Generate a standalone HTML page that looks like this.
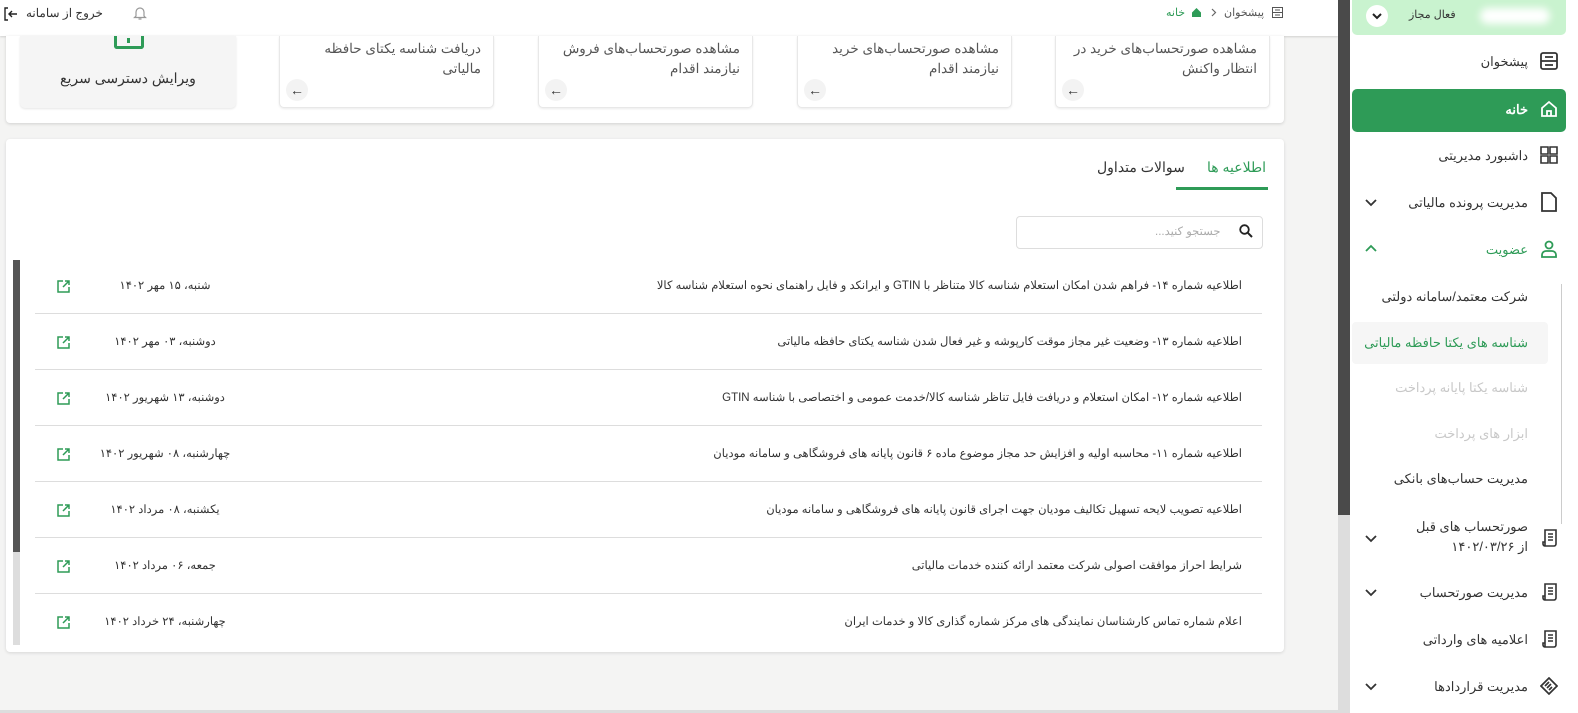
<!DOCTYPE html>
<html><head><meta charset="utf-8"><style>
*{box-sizing:border-box;margin:0;padding:0}
body{width:1578px;height:713px;overflow:hidden;background:#f4f4f3;font-family:"Liberation Sans","Noto Sans CJK SC",sans-serif;color:#333;position:relative}
.a{position:absolute}
.hdr{left:0;top:0;width:1338px;height:36px;background:#fff;box-shadow:0 1px 2px rgba(0,0,0,.15)}
.cards{left:6px;top:36px;width:1278px;height:87px;background:#fff;box-shadow:0 1px 3px rgba(0,0,0,.15);border-radius:0 0 4px 4px}
.card{top:36px;width:215px;height:72px;background:#fff;border:1px solid #e8e8e8;border-top:none;border-radius:0 0 5px 5px;box-shadow:0 1px 2px rgba(0,0,0,.08);direction:rtl;font-size:13.5px;color:#555;padding:3px 12px 0 12px;line-height:20px}
.arr{position:absolute;left:6px;bottom:6px;width:22px;height:22px;border-radius:50%;background:#f3f3f3;font-size:14px;text-align:center;line-height:22px;color:#333}
.main{left:6px;top:139px;width:1278px;height:513px;background:#fff;border-radius:4px;box-shadow:0 1px 3px rgba(0,0,0,.12)}
.row{left:35px;width:1227px;height:56px;border-bottom:1.5px solid #ddd;direction:rtl;font-size:11.5px;color:#333}
.row .t{position:absolute;right:20px;top:0;line-height:56px;white-space:nowrap}
.row .d{position:absolute;left:62px;width:136px;text-align:center;top:0;line-height:56px;direction:rtl;font-size:11.5px}
.row .ic{position:absolute;left:22px;top:22px;width:13px;height:13px}
.mi{position:absolute;left:1351px;width:215px;height:44px;direction:rtl;font-size:13px;color:#333}
.mi .l{position:absolute;right:38px;top:0;line-height:44px;white-space:nowrap}
.mi svg.i{position:absolute;right:8px;top:12px}
.mi .ch{position:absolute;left:14px;top:16px}
.sub{position:absolute;left:1351px;width:187px;height:44px;direction:rtl;font-size:13px;line-height:44px;padding-right:10px;color:#333;white-space:nowrap}
</style></head><body>
<div class="a hdr"></div>
<div class="a" style="top:6px;font-size:12px;direction:rtl;white-space:nowrap;left:26px">خروج از سامانه</div>
<svg class="a" style="left:4px;top:7px" width="14" height="14" viewBox="0 0 14 14"><path d="M4 1H1v12h3M13 7H5M8 4L5 7l3 3" fill="none" stroke="#222" stroke-width="1.4"/></svg>
<svg class="a" style="left:133px;top:5px" width="14" height="16" viewBox="0 0 14 16"><path d="M3 11V7a4 4 0 0 1 8 0v4l1.5 1.5h-11zM5.5 14h3" fill="none" stroke="#999" stroke-width="1.2"/></svg>
<div class="a" style="left:1166px;top:6px;font-size:11px;direction:rtl;white-space:nowrap;color:#2e9b57">خانه</div>
<svg class="a" style="left:1191px;top:7px" width="11" height="11" viewBox="0 0 11 11"><path d="M1 5.5L5.5 1 10 5.5V10H1z" fill="#2e9b57"/></svg>
<svg class="a" style="left:1211px;top:8px" width="6" height="9" viewBox="0 0 6 9"><path d="M1 1l3.5 3.5L1 8" fill="none" stroke="#666" stroke-width="1.2"/></svg>
<div class="a" style="left:1224px;top:6px;font-size:11px;white-space:nowrap;color:#555;direction:rtl">پیشخوان</div>
<svg class="a" style="left:1272px;top:7px" width="11" height="11" viewBox="0 0 11 11"><rect x=".5" y=".5" width="10" height="10" fill="none" stroke="#555"/><path d="M.5 5.5h10M3 3h5M3 8h5" stroke="#555"/></svg>

<div class="a cards"></div>
<div class="a" style="left:20px;top:36px;width:216px;height:72px;background:#f5f5f5;border-radius:0 0 5px 5px;box-shadow:0 1px 2px rgba(0,0,0,.1)"></div>
<div class="a" style="left:114px;top:36px;width:30px;height:13px;border:3px solid #2e9b57;border-top:none;border-radius:0 0 3px 3px"></div>
<div class="a" style="left:127px;top:38px;width:3px;height:5px;background:#2e9b57"></div>
<div class="a" style="left:20px;top:70px;width:216px;text-align:center;font-size:14px;direction:rtl;color:#333">ویرایش دسترسی سریع</div>
<div class="a card" style="left:279px">دریافت شناسه یکتای حافظه مالیاتی<span class="arr">←</span></div>
<div class="a card" style="left:538px">مشاهده صورتحساب‌های فروش نیازمند اقدام<span class="arr">←</span></div>
<div class="a card" style="left:797px">مشاهده صورتحساب‌های خرید نیازمند اقدام<span class="arr">←</span></div>
<div class="a card" style="left:1055px">مشاهده صورتحساب‌های خرید در انتظار واکنش<span class="arr">←</span></div>

<div class="a main"></div>
<div class="a" style="left:1207px;top:159px;font-size:14px;color:#2e9b57;direction:rtl">اطلاعیه ها</div>
<div class="a" style="left:1176px;top:187px;width:92px;height:3px;background:#2e9b57"></div>
<div class="a" style="left:1097px;top:159px;font-size:14px;color:#333;direction:rtl">سوالات متداول</div>
<div class="a" style="left:1016px;top:216px;width:247px;height:33px;border:1px solid #ddd;border-radius:4px"></div>
<div class="a" style="left:1155px;top:224px;font-size:11.5px;color:#aaa;direction:rtl">جستجو کنید...</div>
<svg class="a" style="left:1239px;top:224px" width="14" height="14" viewBox="0 0 14 14"><circle cx="5.5" cy="5.5" r="4.3" fill="none" stroke="#222" stroke-width="1.8"/><path d="M8.7 8.7L13 13" stroke="#222" stroke-width="2"/></svg>
<div class="a" style="left:13px;top:260px;width:7px;height:385px;background:#ddd"></div>
<div class="a" style="left:13px;top:260px;width:7px;height:292px;background:#555"></div>

<div class="a row" style="top:258px"><span class="t">اطلاعیه شماره ۱۴- فراهم شدن امکان استعلام شناسه کالا متناظر با GTIN و ایرانکد و فایل راهنمای نحوه استعلام شناسه کالا</span><span class="d">شنبه، ۱۵ مهر ۱۴۰۲</span><svg class="ic" viewBox="0 0 13 13"><path d="M6 1H1v11h11V7M8 1h4v4M12 1L6 7" fill="none" stroke="#2e9b57" stroke-width="1.5"/></svg></div>
<div class="a row" style="top:314px"><span class="t">اطلاعیه شماره ۱۳- وضعیت غیر مجاز موقت کارپوشه و غیر فعال شدن شناسه یکتای حافظه مالیاتی</span><span class="d">دوشنبه، ۰۳ مهر ۱۴۰۲</span><svg class="ic" viewBox="0 0 13 13"><path d="M6 1H1v11h11V7M8 1h4v4M12 1L6 7" fill="none" stroke="#2e9b57" stroke-width="1.5"/></svg></div>
<div class="a row" style="top:370px"><span class="t">اطلاعیه شماره ۱۲- امکان استعلام و دریافت فایل تناظر شناسه کالا/خدمت عمومی و اختصاصی با شناسه GTIN</span><span class="d">دوشنبه، ۱۳ شهریور ۱۴۰۲</span><svg class="ic" viewBox="0 0 13 13"><path d="M6 1H1v11h11V7M8 1h4v4M12 1L6 7" fill="none" stroke="#2e9b57" stroke-width="1.5"/></svg></div>
<div class="a row" style="top:426px"><span class="t">اطلاعیه شماره ۱۱- محاسبه اولیه و افزایش حد مجاز موضوع ماده ۶ قانون پایانه های فروشگاهی و سامانه مودیان</span><span class="d">چهارشنبه، ۰۸ شهریور ۱۴۰۲</span><svg class="ic" viewBox="0 0 13 13"><path d="M6 1H1v11h11V7M8 1h4v4M12 1L6 7" fill="none" stroke="#2e9b57" stroke-width="1.5"/></svg></div>
<div class="a row" style="top:482px"><span class="t">اطلاعیه تصویب لایحه تسهیل تکالیف مودیان جهت اجرای قانون پایانه های فروشگاهی و سامانه مودیان</span><span class="d">یکشنبه، ۰۸ مرداد ۱۴۰۲</span><svg class="ic" viewBox="0 0 13 13"><path d="M6 1H1v11h11V7M8 1h4v4M12 1L6 7" fill="none" stroke="#2e9b57" stroke-width="1.5"/></svg></div>
<div class="a row" style="top:538px"><span class="t">شرایط احراز موافقت اصولی شرکت معتمد ارائه کننده خدمات مالیاتی</span><span class="d">جمعه، ۰۶ مرداد ۱۴۰۲</span><svg class="ic" viewBox="0 0 13 13"><path d="M6 1H1v11h11V7M8 1h4v4M12 1L6 7" fill="none" stroke="#2e9b57" stroke-width="1.5"/></svg></div>
<div class="a row" style="top:594px;border-bottom:none"><span class="t">اعلام شماره تماس کارشناسان نمایندگی های مرکز شماره گذاری کالا و خدمات ایران</span><span class="d">چهارشنبه، ۲۴ خرداد ۱۴۰۲</span><svg class="ic" viewBox="0 0 13 13"><path d="M6 1H1v11h11V7M8 1h4v4M12 1L6 7" fill="none" stroke="#2e9b57" stroke-width="1.5"/></svg></div>
<div class="a" style="left:0;top:710px;width:1338px;height:3px;background:#ddd"></div>

<div class="a" style="left:1338px;top:0;width:12px;height:713px;background:#ddd"></div>
<div class="a" style="left:1338px;top:0;width:12px;height:515px;background:#4a4a4a"></div>
<div class="a" style="left:1350px;top:0;width:228px;height:713px;background:#fff"></div>
<div class="a" style="left:1352px;top:0;width:214px;height:35px;background:#c9f3cf;border-radius:0 0 5px 5px"></div>
<div class="a" style="left:1480px;top:8px;width:70px;height:16px;background:#fff;border-radius:8px;filter:blur(4px)"></div>
<div class="a" style="left:1409px;top:8px;font-size:11px;direction:rtl;color:#333">فعال مجاز</div>
<div class="a" style="left:1366px;top:5px;width:22px;height:22px;border-radius:50%;background:#fff"></div>
<svg class="a" style="left:1372px;top:11px" width="10" height="10" viewBox="0 0 10 10"><path d="M1 3l4 4 4-4" fill="none" stroke="#222" stroke-width="2"/></svg>

<div class="mi" style="top:40px"><span class="l">پیشخوان</span><svg class="i" width="18" height="18" viewBox="0 0 18 18"><rect x="1" y="1" width="16" height="16" rx="2" fill="none" stroke="#333" stroke-width="1.8"/><path d="M1 9h16M5 5h8M5 13h8" stroke="#333" stroke-width="1.8"/></svg></div>
<div class="a" style="left:1352px;top:89px;width:214px;height:43px;background:#2e9b57;border-radius:5px"></div>
<div class="mi" style="top:88px;color:#fff;font-weight:bold"><span class="l">خانه</span><svg class="i" width="18" height="18" viewBox="0 0 18 18"><path d="M2 8L9 2l7 6v8H2zM7 16v-5h4v5" fill="none" stroke="#fff" stroke-width="1.8"/></svg></div>
<div class="mi" style="top:134px"><span class="l">داشبورد مدیریتی</span><svg class="i" width="18" height="18" viewBox="0 0 18 18"><path d="M1 1h7v7H1zM10 1h7v7h-7zM10 10h7v7h-7zM1 10h7v7H1z" fill="none" stroke="#333" stroke-width="1.6"/></svg></div>
<div class="mi" style="top:181px"><span class="l">مدیریت پرونده مالیاتی</span><svg class="i" width="18" height="20" viewBox="0 0 18 20" style="top:11px"><path d="M2 1h9l5 5v13H2z" fill="none" stroke="#333" stroke-width="1.8"/></svg><svg class="ch" width="12" height="10" viewBox="0 0 12 10"><path d="M1 3l5 5 5-5" fill="none" stroke="#333" stroke-width="1.8"/></svg></div>
<div class="mi" style="top:228px;color:#2e9b57"><span class="l">عضویت</span><svg class="i" width="18" height="18" viewBox="0 0 18 18"><circle cx="9" cy="5" r="3.5" fill="none" stroke="#2e9b57" stroke-width="1.8"/><path d="M2 17v-2a4 4 0 0 1 4-4h6a4 4 0 0 1 4 4v2z" fill="none" stroke="#2e9b57" stroke-width="1.8"/></svg><svg class="ch" width="12" height="10" viewBox="0 0 12 10"><path d="M1 7l5-5 5 5" fill="none" stroke="#2e9b57" stroke-width="1.8"/></svg></div>
<div class="a" style="left:1561px;top:284px;width:1px;height:240px;background:#ccc"></div>
<div class="sub" style="top:275px">شرکت معتمد/سامانه دولتی</div>
<div class="a" style="left:1352px;top:322px;width:196px;height:42px;background:#f6f6f6;border-radius:4px"></div>
<div class="sub" style="top:321px;color:#2e9b57">شناسه های یکتا حافظه مالیاتی</div>
<div class="sub" style="top:366px;color:#c8c8c8">شناسه یکتا پایانه پرداخت</div>
<div class="sub" style="top:412px;color:#c8c8c8">ابزار های پرداخت</div>
<div class="sub" style="top:457px">مدیریت حساب‌های بانکی</div>
<div class="mi" style="top:514px;height:48px"><span class="l" style="line-height:20px;top:3px;white-space:normal;width:120px">صورتحساب های قبل از ۱۴۰۲/۰۳/۲۶</span><svg class="i" width="16" height="18" viewBox="0 0 16 18" style="top:15px"><path d="M3 1h11v14a2 2 0 0 1-2 2H3zM3 17a2 2 0 0 1-2-2v-2h2M6 5h5M6 8h5M6 11h5" fill="none" stroke="#333" stroke-width="1.6"/></svg><svg class="ch" width="12" height="10" viewBox="0 0 12 10" style="top:19px"><path d="M1 3l5 5 5-5" fill="none" stroke="#333" stroke-width="1.8"/></svg></div>
<div class="mi" style="top:571px"><span class="l">مدیریت صورتحساب</span><svg class="i" width="16" height="18" viewBox="0 0 16 18"><path d="M3 1h11v14a2 2 0 0 1-2 2H3zM3 17a2 2 0 0 1-2-2v-2h2M6 5h5M6 8h5M6 11h5" fill="none" stroke="#333" stroke-width="1.6"/></svg><svg class="ch" width="12" height="10" viewBox="0 0 12 10"><path d="M1 3l5 5 5-5" fill="none" stroke="#333" stroke-width="1.8"/></svg></div>
<div class="mi" style="top:618px"><span class="l">اعلامیه های وارداتی</span><svg class="i" width="16" height="18" viewBox="0 0 16 18"><path d="M3 1h11v14a2 2 0 0 1-2 2H3zM3 17a2 2 0 0 1-2-2v-2h2M6 5h5M6 8h5M6 11h5" fill="none" stroke="#333" stroke-width="1.6"/></svg></div>
<div class="mi" style="top:665px"><span class="l">مدیریت قراردادها</span><svg class="i" width="18" height="18" viewBox="0 0 18 18"><path d="M9 1l8 8-8 8-8-8zM5 9l4-4M7 11l4-4M9 13l3-3" fill="none" stroke="#333" stroke-width="1.7"/></svg><svg class="ch" width="12" height="10" viewBox="0 0 12 10"><path d="M1 3l5 5 5-5" fill="none" stroke="#333" stroke-width="1.8"/></svg></div>
</body></html>
